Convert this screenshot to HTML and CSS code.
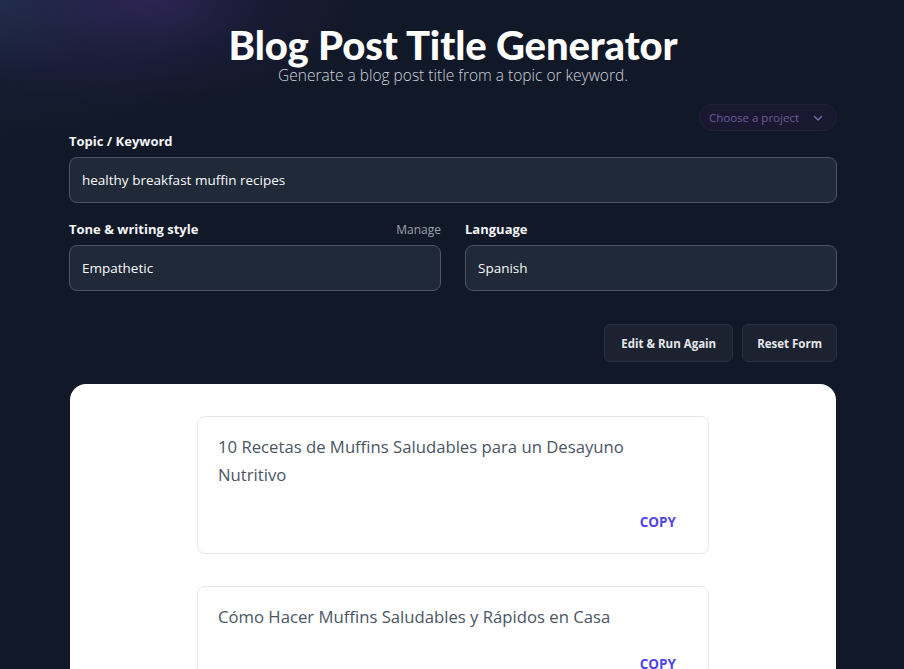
FILE: index.html
```html
<!DOCTYPE html>
<html lang="en">
<head>
<meta charset="utf-8">
<title>Blog Post Title Generator</title>
<link rel="stylesheet" href="styles.css">
</head>
<body>
<div class="glow"></div>
<main class="page">
  <header class="hero">
    <h1 class="title">Blog Post Title Generator</h1>
    <p class="subtitle">Generate a blog post title from a topic or keyword.</p>
  </header>
  <div class="project-row">
    <button class="project-select">Choose a project
      <svg class="chev" width="12" height="12" viewBox="0 0 12 12"><path d="M2.5 4.5 L6 8 L9.5 4.5" fill="none" stroke="currentColor" stroke-width="1.3" stroke-linecap="round" stroke-linejoin="round"/></svg>
    </button>
  </div>
  <div class="field">
    <div class="label-row"><label class="label">Topic / Keyword</label></div>
    <div class="input">healthy breakfast muffin recipes</div>
  </div>
  <div class="grid">
    <div class="field">
      <div class="label-row"><label class="label">Tone &amp; writing style</label><span class="manage">Manage</span></div>
      <div class="input">Empathetic</div>
    </div>
    <div class="field">
      <div class="label-row"><label class="label">Language</label></div>
      <div class="input">Spanish</div>
    </div>
  </div>
  <div class="actions">
    <button class="btn">Edit &amp; Run Again</button>
    <button class="btn">Reset Form</button>
  </div>
  <section class="results">
    <div class="result">
      <p class="result-text">10 Recetas de Muffins Saludables para un Desayuno Nutritivo</p>
      <div class="result-foot"><span class="copy">COPY</span></div>
    </div>
    <div class="result">
      <p class="result-text">Cómo Hacer Muffins Saludables y Rápidos en Casa</p>
      <div class="result-foot"><span class="copy">COPY</span></div>
    </div>
  </section>
</main>
</body>
</html>
```
FILE: styles.css
```css
html, body {
  margin: 0;
  padding: 0;
  background: #111827;
  height: 100%;
  overflow: hidden;
}
body {
  font-family: "Open Sans", "Noto Sans", sans-serif;
  color: #f3f4f6;
  position: relative;
}
.glow {
  position: absolute;
  left: 0;
  top: 0;
  width: 460px;
  height: 220px;
  background:
    radial-gradient(ellipse 220px 110px at 150px 0px, rgba(55, 40, 98, 0.7) 0%, rgba(40, 32, 78, 0.35) 50%, rgba(17, 24, 39, 0) 100%),
    radial-gradient(ellipse 260px 150px at 0px 0px, rgba(36, 54, 86, 0.8) 0%, rgba(30, 36, 68, 0.4) 50%, rgba(17, 24, 39, 0) 100%);
  pointer-events: none;
}
.page {
  position: relative;
  width: 768px;
  margin-left: 69px;
  padding-top: 23px;
}
.hero {
  text-align: center;
}
.title {
  margin: 0;
  font-family: Lato, sans-serif;
  font-weight: 900;
  font-size: 40px;
  line-height: 44px;
  color: #ffffff;
  letter-spacing: -0.1px;
}
.subtitle {
  margin: 0;
  font-size: 15.5px;
  line-height: 16px;
  color: #cfd4dc;
  font-weight: 300;
}
.project-row {
  display: flex;
  justify-content: flex-end;
  margin-top: 21px;
}
.project-select {
  display: flex;
  align-items: center;
  gap: 13px;
  height: 27px;
  padding: 0 12px 0 9px;
  border-radius: 14px;
  border: 1px solid #24213a;
  background: #1a1830;
  color: #6d5b9c;
  font-family: "Open Sans", sans-serif;
  font-size: 11.5px;
}
.chev { color: #7d6fa8; }
.field {
  display: flex;
  flex-direction: column;
}
.label-row {
  display: flex;
  justify-content: space-between;
  align-items: center;
  height: 20px;
  margin-bottom: 6px;
}
.label {
  font-size: 13px;
  font-weight: 700;
  color: #f3f4f6;
}
.manage {
  font-size: 12px;
  color: #9ca3af;
}
.input {
  height: 44px;
  border: 1px solid #4b5563;
  border-radius: 8px;
  background: #1f2937;
  display: flex;
  align-items: center;
  padding: 0 12px;
  font-size: 13.5px;
  color: #f9fafb;
}
.grid {
  display: grid;
  grid-template-columns: 1fr 1fr;
  gap: 24px;
  margin-top: 16px;
}
.actions {
  display: flex;
  justify-content: flex-end;
  gap: 9px;
  margin-top: 33px;
}
.btn {
  height: 38px;
  padding: 0 16px;
  border: 1px solid #283141;
  border-radius: 6px;
  background: #1c2230;
  color: #e5e7eb;
  font-family: "Open Sans", sans-serif;
  font-weight: 700;
  font-size: 11.5px;
}
.btn + .btn {
  padding: 0 14px;
}
.results {
  margin: 22px 1px 0;
  background: #ffffff;
  border-radius: 16px;
  padding: 32px 0 40px;
  display: flex;
  flex-direction: column;
  align-items: center;
  gap: 32px;
  min-height: 400px;
}
.result {
  width: 512px;
  box-sizing: border-box;
  border: 1px solid #e5e7eb;
  border-radius: 8px;
  padding: 16px 32px 22px 20px;
}
.result-text {
  margin: 0;
  font-size: 16.7px;
  line-height: 28px;
  color: #4b5563;
  font-weight: 400;
}
.result-foot {
  display: flex;
  justify-content: flex-end;
  margin-top: 24px;
}
.copy {
  font-size: 13.5px;
  font-weight: 700;
  color: #4f46e5;
}
```
